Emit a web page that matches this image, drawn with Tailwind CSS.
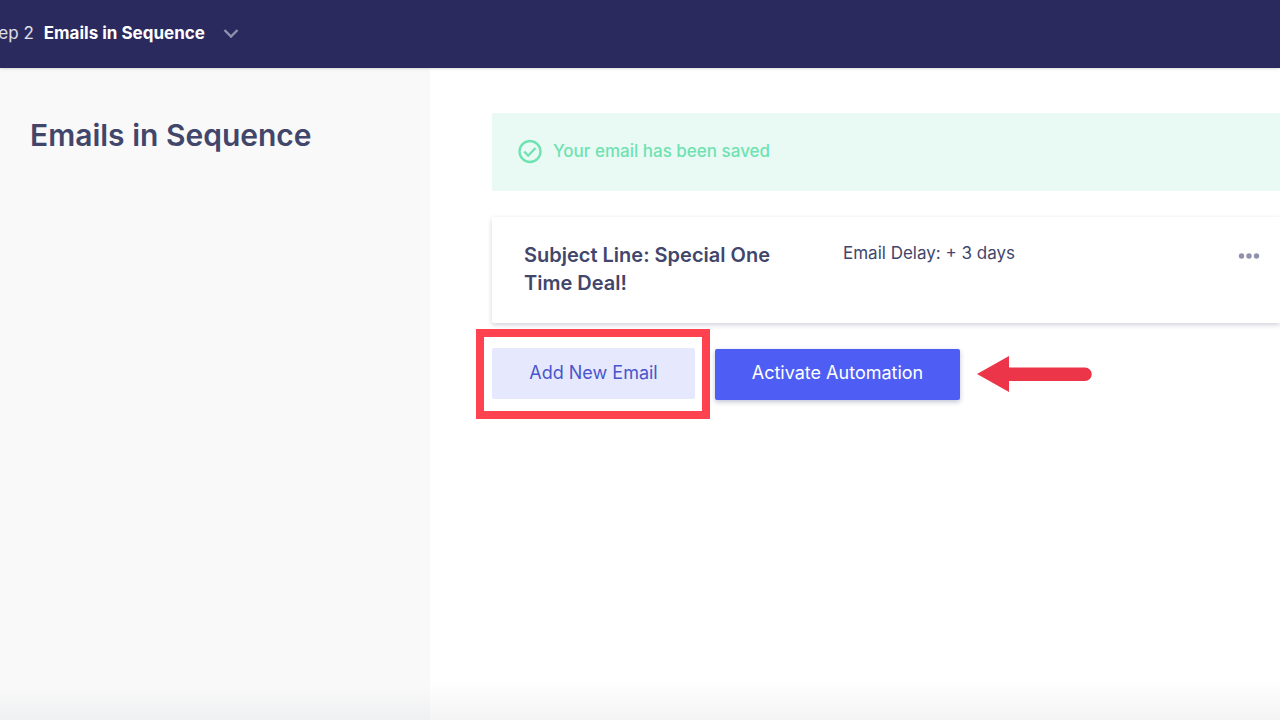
<!DOCTYPE html>
<html lang="en">
<head>
<meta charset="utf-8">
<meta name="viewport" content="width=device-width, initial-scale=1">
<title>Emails in Sequence</title>
<script src="https://cdn.jsdelivr.net/npm/@tailwindcss/browser@4"></script>
</head>
<body class="flex min-h-screen flex-col overflow-x-hidden bg-white font-['Inter','Liberation_Sans',sans-serif] text-[17px] text-[#42466b]">
  <header class="relative z-10 flex h-[68px] items-center bg-[#2b2a5e] text-white shadow-sm">
    <button type="button" class="-ml-[18px] flex items-center whitespace-nowrap">
      <span class="text-white/85">Step 2</span>
      <span class="ml-[10px] font-bold">Emails in Sequence</span>
      <svg class="ml-[18px] h-4 w-4 text-[#918fae]" viewBox="0 0 16 16" fill="none" stroke="currentColor" stroke-width="2.4" aria-hidden="true"><path d="M1.500 4 8 10.500 14.500 4"/></svg>
    </button>
  </header>
  <div class="flex flex-1">
    <aside class="w-[430px] shrink-0 bg-gradient-to-b from-[#f9f9f9] from-95% to-[#eff0f2] px-[30px] pt-[47px]">
      <h1 class="text-[30px] leading-10 font-semibold">Emails in Sequence</h1>
    </aside>
    <main class="min-w-0 flex-1 bg-gradient-to-b from-white from-94% to-[#f4f4f4] pt-[45px] pl-[62px]">
      <div role="status" class="flex h-[78px] items-center gap-[11px] rounded-l-xs bg-[#e9faf5] pl-[26px] font-medium text-[#6ee2b0]">
        <svg class="h-6 w-6" viewBox="0 0 24 24" fill="none" stroke="currentColor" stroke-width="2.300" aria-hidden="true"><circle cx="12" cy="11.500" r="10.500"/><path d="m6.200 11.500 4 4.200 7.300-7.700"/></svg>
        <p>Your email has been saved</p>
      </div>
      <section class="mt-[26px] flex h-[106px] items-start rounded-l-xs bg-white pt-6 pr-[19px] pl-8 shadow-[0_2px_5px_rgba(50,55,85,0.22)]">
        <h2 class="w-[265px] text-xl leading-7 font-semibold">Subject Line: Special One Time Deal!</h2>
        <p class="ml-[54px] leading-6">Email Delay: + 3 days</p>
        <button type="button" aria-label="More options" class="ml-auto flex h-[30px] items-center">
          <svg class="h-2 w-6" viewBox="0 0 24 8" fill="#8f91ad" aria-hidden="true"><circle cx="4.500" cy="4" r="2.700"/><circle cx="12" cy="4" r="2.700"/><circle cx="19.500" cy="4" r="2.700"/></svg>
        </button>
      </section>
      <div class="mt-[6px] -ml-4 flex items-center text-lg">
        <div class="border-8 border-[#ff424f] pt-[11px] pr-[7px] pb-3 pl-2">
          <button type="button" class="block h-[51px] w-[203px] rounded-xs bg-[#e6e9fd] pb-[2px] text-[#4956cb]">Add New Email</button>
        </div>
        <button type="button" class="ml-[5px] h-[51px] w-[245px] rounded-xs bg-[#4e5ef4] pb-[2px] text-white shadow-[0_2px_5px_rgba(50,55,110,0.3)]">Activate Automation</button>
        <svg class="ml-4 h-9 w-[116px]" viewBox="0 0 116 36" fill="#ec3548" aria-hidden="true"><path d="M1 18 33 0v11.500h76a6.500 6.500 0 0 1 0 13.500H33v11Z"/></svg>
      </div>
    </main>
  </div>
</body>
</html>
